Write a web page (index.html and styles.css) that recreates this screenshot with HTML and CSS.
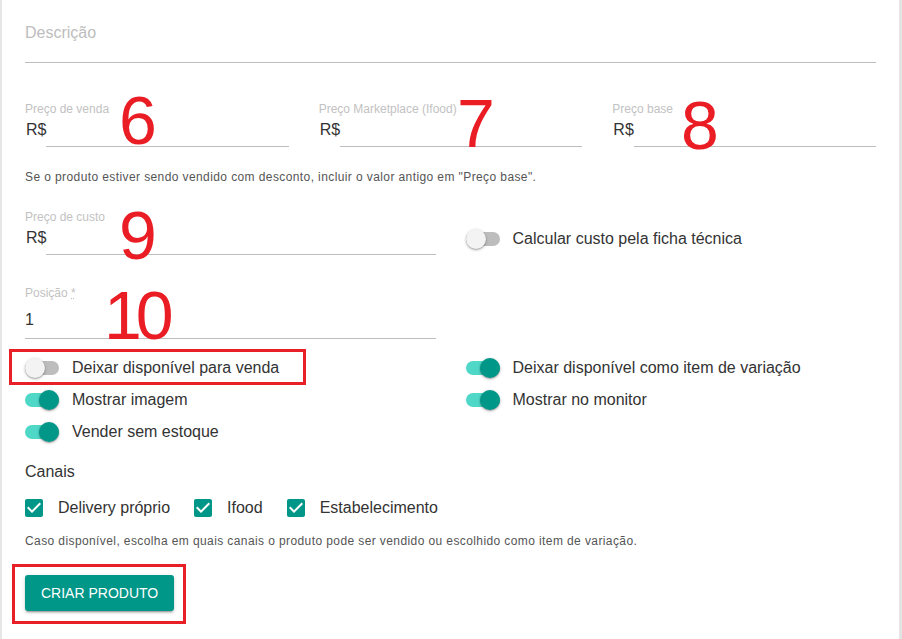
FILE: index.html
```html
<!DOCTYPE html>
<html lang="pt-BR">
<head>
<meta charset="utf-8">
<title>Criar produto</title>
<link rel="stylesheet" href="styles.css">
</head>
<body>
<main class="form">
  <div class="field-desc"><span class="placeholder">Descrição</span></div>

  <div class="grid3 prices">
    <div class="field">
      <label class="label">Preço de venda</label>
      <div class="adorned"><span class="prefix">R$</span><span class="line"></span></div>
    </div>
    <div class="field">
      <label class="label">Preço Marketplace (Ifood)</label>
      <div class="adorned"><span class="prefix">R$</span><span class="line"></span></div>
    </div>
    <div class="field">
      <label class="label">Preço base</label>
      <div class="adorned"><span class="prefix">R$</span><span class="line"></span></div>
    </div>
  </div>

  <p class="helper helper-price">Se o produto estiver sendo vendido com desconto, incluir o valor antigo em "Preço base".</p>

  <div class="grid2 cost-row">
    <div class="field">
      <label class="label">Preço de custo</label>
      <div class="adorned"><span class="prefix">R$</span><span class="line"></span></div>
    </div>
    <div class="cost-switch">
      <div class="switch-row"><span class="switch"><span class="track"></span><span class="thumb"></span></span><span class="switch-text">Calcular custo pela ficha técnica</span></div>
    </div>
  </div>

  <div class="grid2 pos-row">
    <div class="field">
      <label class="label">Posição <abbr class="req">*</abbr></label>
      <div class="plain-input">1</div>
    </div>
  </div>

  <div class="grid2 switches">
    <div class="switch-col">
      <div class="switch-row"><span class="switch"><span class="track"></span><span class="thumb"></span></span><span class="switch-text">Deixar disponível para venda</span></div>
      <div class="switch-row"><span class="switch on"><span class="track"></span><span class="thumb"></span></span><span class="switch-text">Mostrar imagem</span></div>
      <div class="switch-row"><span class="switch on"><span class="track"></span><span class="thumb"></span></span><span class="switch-text">Vender sem estoque</span></div>
    </div>
    <div class="switch-col">
      <div class="switch-row"><span class="switch on"><span class="track"></span><span class="thumb"></span></span><span class="switch-text">Deixar disponível como item de variação</span></div>
      <div class="switch-row"><span class="switch on"><span class="track"></span><span class="thumb"></span></span><span class="switch-text">Mostrar no monitor</span></div>
    </div>
  </div>

  <div class="channels-title">Canais</div>
  <div class="checks">
    <div class="check-item">
      <svg class="check" viewBox="0 0 24 24" width="24" height="24"><path d="M19 3H5c-1.11 0-2 .9-2 2v14c0 1.1.89 2 2 2h14c1.11 0 2-.9 2-2V5c0-1.1-.89-2-2-2zm-9 14l-5-5 1.41-1.41L10 14.17l7.59-7.59L19 8l-9 9z"/></svg>
      <span class="check-text">Delivery próprio</span>
    </div>
    <div class="check-item">
      <svg class="check" viewBox="0 0 24 24" width="24" height="24"><path d="M19 3H5c-1.11 0-2 .9-2 2v14c0 1.1.89 2 2 2h14c1.11 0 2-.9 2-2V5c0-1.1-.89-2-2-2zm-9 14l-5-5 1.41-1.41L10 14.17l7.59-7.59L19 8l-9 9z"/></svg>
      <span class="check-text">Ifood</span>
    </div>
    <div class="check-item">
      <svg class="check" viewBox="0 0 24 24" width="24" height="24"><path d="M19 3H5c-1.11 0-2 .9-2 2v14c0 1.1.89 2 2 2h14c1.11 0 2-.9 2-2V5c0-1.1-.89-2-2-2zm-9 14l-5-5 1.41-1.41L10 14.17l7.59-7.59L19 8l-9 9z"/></svg>
      <span class="check-text">Estabelecimento</span>
    </div>
  </div>

  <p class="helper helper-channels">Caso disponível, escolha em quais canais o produto pode ser vendido ou escolhido como item de variação.</p>

  <button class="btn" type="button">CRIAR PRODUTO</button>
</main>

<div class="annotations">
  <span class="num n6">6</span>
  <span class="num n7">7</span>
  <span class="num n8">8</span>
  <span class="num n9">9</span>
  <span class="num n10">10</span>
  <span class="redbox box-sale"></span>
  <span class="redbox box-btn"></span>
</div>
</body>
</html>
```

FILE: styles.css
```css
* { box-sizing: border-box; }

html, body {
  margin: 0;
  padding: 0;
  background: #fff;
}

body {
  width: 902px;
  height: 639px;
  overflow: hidden;
  position: relative;
  font-family: "Liberation Sans", Arial, sans-serif;
  color: #333;
}

.form {
  height: 639px;
  border-left: 2px solid #e6e6e6;
  border-right: 3px solid #e4e4e4;
  padding: 0 23px 0 23px;
}

/* Description */
.field-desc {
  padding: 23px 0 19px;
  border-bottom: 1px solid #bdbdbd;
}
.placeholder {
  display: block;
  font-size: 16px;
  line-height: 20px;
  color: #bdbdbd;
}

.grid3 {
  display: grid;
  grid-template-columns: repeat(3, 1fr);
  column-gap: 30px;
}
.grid2 {
  display: grid;
  grid-template-columns: 1fr 1fr;
  column-gap: 30px;
}

.prices { margin-top: 39px; }

.label {
  display: block;
  font-size: 12px;
  line-height: 14px;
  color: #c2c2c2;
}
.req {
  text-decoration: underline dotted;
  color: #c2c2c2;
}

.adorned {
  display: flex;
}
.prefix {
  font-size: 16px;
  line-height: 20px;
  padding: 4px 0 7px 1px;
  color: #333;
}
.line {
  flex: 1;
  border-bottom: 1px solid #bdbdbd;
}

.helper {
  margin: 0;
  font-size: 12px;
  line-height: 14px;
  letter-spacing: 0.4px;
  color: #555;
}
.helper-price { margin-top: 23px; }

.cost-row { margin-top: 26px; }
.cost-switch { padding-top: 13px; }

.pos-row { margin-top: 31px; }
.plain-input {
  font-size: 16px;
  line-height: 20px;
  padding: 10px 0 8px;
  border-bottom: 1px solid #bdbdbd;
  color: #333;
}

/* Switches */
.switches { margin-top: 13px; }
.switch-row {
  display: flex;
  align-items: center;
  height: 32px;
}
.switch {
  position: relative;
  flex: none;
  width: 34px;
  height: 20px;
  margin-right: 13px;
}
.switch .track {
  position: absolute;
  left: 0;
  top: 3px;
  width: 34px;
  height: 14px;
  border-radius: 7px;
  background: #bdbdbd;
}
.switch .thumb {
  position: absolute;
  left: 0;
  top: 0;
  width: 20px;
  height: 20px;
  border-radius: 50%;
  background: #f3f3f3;
  box-shadow: 0 1px 3px rgba(0,0,0,0.3), 0 1px 1px rgba(0,0,0,0.14);
}
.switch.on .track { background: #4fd8c8; }
.switch.on .thumb {
  left: 14px;
  background: #009688;
}
.switch-text {
  font-size: 16px;
  line-height: 20px;
  color: #333;
}

/* Channels */
.channels-title {
  margin-top: 14px;
  font-size: 16px;
  line-height: 20px;
  color: #333;
}
.checks {
  display: flex;
  align-items: center;
  gap: 21px;
  margin-top: 14px;
  margin-left: -3px;
}
.check-item {
  display: flex;
  align-items: center;
  height: 24px;
}
.check {
  flex: none;
  fill: #009688;
  margin-right: 12px;
}
.check-text {
  font-size: 16px;
  line-height: 20px;
  color: #333;
}

.helper-channels { margin-top: 14px; }

.btn {
  display: block;
  margin-top: 27px;
  height: 36px;
  padding: 0 16px;
  border: 0;
  border-radius: 3px;
  background: #009688;
  color: #fff;
  font-family: "Liberation Sans", Arial, sans-serif;
  font-size: 14px;
  line-height: 36px;
  box-shadow: 0 3px 1px -2px rgba(0,0,0,0.2), 0 2px 2px 0 rgba(0,0,0,0.14), 0 1px 5px 0 rgba(0,0,0,0.12);
}

/* Annotation overlay */
.annotations {
  position: absolute;
  inset: 0;
  pointer-events: none;
}
.num {
  position: absolute;
  font-family: "Liberation Sans", Arial, sans-serif;
  font-size: 68px;
  line-height: 68px;
  color: #ea1c24;
}
.n6 { left: 119px; top: 86px; }
.n7 { left: 457px; top: 89px; }
.n8 { left: 681px; top: 91px; }
.n9 { left: 119px; top: 201px; }
.n10 { left: 104px; top: 281px; letter-spacing: -6px; }

.redbox {
  position: absolute;
  border: 3px solid #e81f27;
}
.box-sale { left: 9px; top: 349px; width: 297px; height: 36px; }
.box-btn { left: 12px; top: 564px; width: 174px; height: 60px; }
```
